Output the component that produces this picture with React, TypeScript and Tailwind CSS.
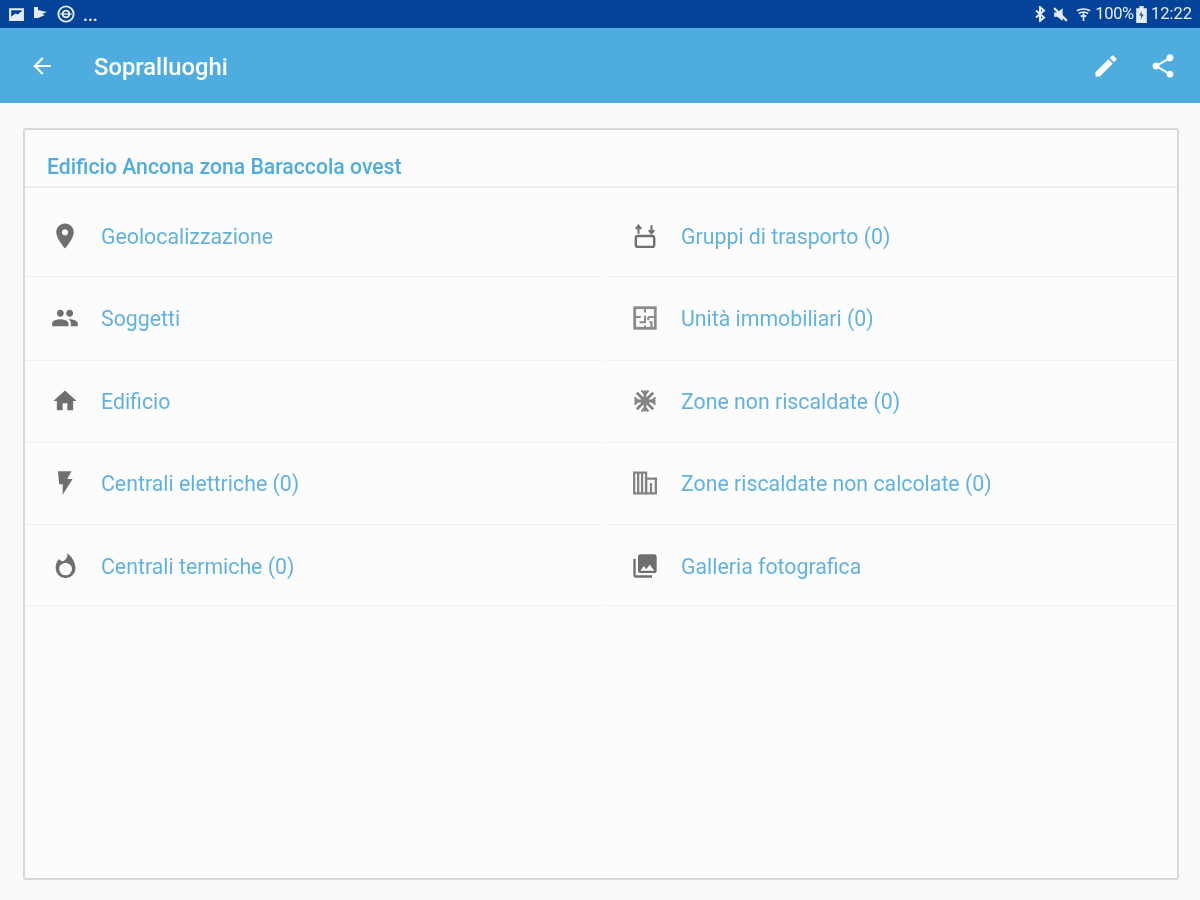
import React from "react";

const P = ({ d, className = "" }: { d: string; className?: string }) => (
  <svg viewBox="0 0 24 24" className={className} fill="currentColor"><path d={d} fillRule="evenodd" /></svg>
);

const icons: Record<string, React.ReactNode> = {
  place: <P className="w-[30px] h-[30px]" d="M12 2C8.13 2 5 5.13 5 9c0 5.25 7 13 7 13s7-7.75 7-13c0-3.87-3.13-7-7-7zm0 9.5c-1.38 0-2.5-1.12-2.5-2.5s1.12-2.5 2.5-2.5 2.5 1.12 2.5 2.5-1.12 2.5-2.5 2.5z" />,
  people: <P className="w-[28px] h-[28px]" d="M16 11c1.66 0 2.99-1.34 2.99-3S17.66 5 16 5c-1.66 0-3 1.34-3 3s1.34 3 3 3zm-8 0c1.66 0 2.99-1.34 2.99-3S9.66 5 8 5C6.34 5 5 6.34 5 8s1.34 3 3 3zm0 2c-2.33 0-7 1.17-7 3.5V19h14v-2.5c0-2.33-4.67-3.5-7-3.5zm8 0c-.29 0-.62.02-.97.05 1.16.84 1.97 1.97 1.97 3.45V19h6v-2.5c0-2.33-4.67-3.5-7-3.5z" />,
  home: <P className="w-[28px] h-[28px]" d="M10 20v-6h4v6h5v-8h3L12 3 2 12h3v8z" />,
  flash: <P className="w-[28px] h-[28px]" d="M6 2h11.500l-3.500 6.500h4.500L10 22v-9H7z" />,
  flame: <P className="w-[28px] h-[28px]" d="M14 1c.5 3-1 5-3 6.500-1 .8-2.500.5-4-1.500-2.500 2.500-3 5-3 8a8.500 8.500 0 0 0 17 0c0-5-3-10-7-13zM12.500 9.500c-3 0-5.500 2.200-5.500 5a5.500 5.500 0 0 0 11 0c0-2.800-2.500-5-5.500-5z" />,
  transport: (
    <svg viewBox="0 0 24 24" className="w-[26px] h-[26px]" fill="none" stroke="currentColor">
      <rect x="3.500" y="12" width="17" height="10" rx="2" strokeWidth="2.200" />
      <path d="M6 10V3M3.500 5.500 6 2.500l2.500 3M18 2v7M15.500 6.500l2.500 3 2.500-3" strokeWidth="1.900" />
    </svg>
  ),
  plan: (
    <svg viewBox="0 0 24 24" className="w-[26px] h-[26px] opacity-80" fill="none" stroke="currentColor">
      <rect x="2.500" y="2.500" width="19" height="19" strokeWidth="2.600" />
      <path d="M12 2v5M12 10v6H7M2 11h6M15 11h7M15 11v3M16 16h2v6M12 19v3" strokeWidth="1.900" />
    </svg>
  ),
  snow: (
    <svg viewBox="0 0 24 24" className="w-[28px] h-[28px] opacity-85" fill="none" stroke="currentColor" strokeWidth="2.400">
      <path d="M5 5l14 14M19 5 5 19M12 3v18M3 12h18" />
      <path d="M9 3l3 3.500L15 3M9 21l3-3.500 3 3.500M3 9l3.500 3L3 15M21 9l-3.500 3 3.500 3" strokeWidth="1.700" />
      <circle cx="12" cy="12" r="2.500" fill="currentColor" strokeWidth="1" />
    </svg>
  ),
  bars: (
    <svg viewBox="0 0 24 24" className="w-[26px] h-[26px] opacity-85" fill="none" stroke="currentColor" strokeWidth="2.100">
      <path d="M2 2.500h11v19H2zM5.700 2.500v19M9.300 2.500v19" />
      <path d="M13 8h9v13.500h-9zM17.500 12v9.500" />
    </svg>
  ),
  photos: <P className="w-[28px] h-[28px]" d="M22 16V4c0-1.100-.9-2-2-2H8c-1.100 0-2 .9-2 2v12c0 1.100.9 2 2 2h12c1.100 0 2-.9 2-2zm-11-4l2.030 2.710L16 11l4 5H8l3-4zM2 6v14c0 1.100.9 2 2 2h14v-2H4V6H2z" />,
};

const left = [
  ["place", "Geolocalizzazione"],
  ["people", "Soggetti"],
  ["home", "Edificio"],
  ["flash", "Centrali elettriche (0)"],
  ["flame", "Centrali termiche (0)"],
];
const right = [
  ["transport", "Gruppi di trasporto (0)"],
  ["plan", "Unità immobiliari (0)"],
  ["snow", "Zone non riscaldate (0)"],
  ["bars", "Zone riscaldate non calcolate (0)"],
  ["photos", "Galleria fotografica"],
];
const rows = [
  "h-[89px] pt-[8px]",
  "h-[84px] pb-[2px]",
  "h-[82px] pb-[2px]",
  "h-[82px] pb-[1px]",
  "h-[81px] pt-[2px]",
];

function Column({ items, className, iconWidth }: { items: string[][]; className: string; iconWidth: string }) {
  return (
    <div className={className}>
      {items.map(([icon, label], i) => (
        <div key={label} className={`flex items-center border-b border-[#f1f1f1] ${rows[i]}`}>
          <span className={`${iconWidth} flex justify-center text-[#6f6f6f]`}>{icons[icon]}</span>
          <span className="text-[21.3px] leading-none text-[#62b2e0] mt-[2px]">{label}</span>
        </div>
      ))}
    </div>
  );
}

export default function App() {
  return (
    <div className="w-[1200px] h-[900px] overflow-hidden flex flex-col bg-[#fafafa] font-['Roboto',sans-serif] blur-[0.6px]">
      <div className="h-[28px] shrink-0 bg-[#034399] flex items-center justify-between pl-[8px] pr-[8px] text-[#e6edf6]">
        <div className="flex items-center gap-[8px]">
          <svg viewBox="0 0 16 16" className="w-[17px] h-[17px]" fill="currentColor">
            <path d="M1 2h14v12H1zM3 10l4-3 2 1 4-3V4H3z" fillRule="evenodd" />
          </svg>
          <svg viewBox="0 0 16 16" className="w-[16px] h-[16px]" fill="currentColor">
            <path d="M1 1h4v3l9 2-5 2 3 1-7 3H1z" />
          </svg>
          <svg viewBox="0 0 16 16" className="w-[18px] h-[18px]" fill="none" stroke="currentColor" strokeWidth="1.700">
            <circle cx="8" cy="8" r="6.800" />
            <circle cx="8" cy="8" r="3" />
            <path d="M3 8h10" strokeWidth="1.200" />
          </svg>
          <span className="text-[17px] leading-none font-bold mt-[2px]">...</span>
        </div>
        <div className="flex items-center">
          <svg viewBox="0 0 12 16" className="w-[12px] h-[16px] mr-[6px]" fill="none" stroke="currentColor" strokeWidth="2">
            <path d="M2 4.500l8 7-4 3.500V1l4 3.500-8 7" />
          </svg>
          <svg viewBox="0 0 16 16" className="w-[17px] h-[17px] mr-[7px]" fill="currentColor">
            <path d="M2 6h3l5-4v12l-5-4H2z" />
            <path d="M2 2l12 12" stroke="currentColor" strokeWidth="2" />
          </svg>
          <svg viewBox="0 0 16 16" className="w-[15px] h-[17px] mr-[4px]" fill="none" stroke="currentColor" strokeWidth="1.800">
            <path d="M1 4c4-2.500 10-2.500 14 0M3 7c3-2 7-2 10 0M5 10c2-1 4-1 6 0M8 5v10" />
          </svg>
          <span className="text-[16.5px] leading-none tracking-[-0.3px]">100%</span>
          <svg viewBox="0 0 10 16" className="w-[11px] h-[17px] ml-[2px] mr-[4px]" fill="currentColor">
            <path d="M3 0h4v2h3v14H0V2h3zM5 5 3 9h2l-1 4 3-5H5z" fillRule="evenodd" />
          </svg>
          <span className="text-[16.5px] leading-none">12:22</span>
        </div>
      </div>

      <div className="h-[75px] shrink-0 bg-[#4facdf] flex items-center text-white">
        <P className="w-[26px] h-[26px] ml-[29px]" d="M20 11H7.830l5.590-5.590L12 4l-8 8 8 8 1.410-1.410L7.830 13H20v-2z" />
        <span className="ml-[39px] text-[23.8px] font-medium leading-none mt-[5px]">Sopralluoghi</span>
        <div className="ml-auto flex items-center mt-[1px]">
          <P className="w-[28px] h-[28px]" d="M3 17.250V21h3.750L17.810 9.940l-3.750-3.750L3 17.250zM20.710 7.040c.39-.39.39-1.020 0-1.410l-2.340-2.340c-.39-.39-1.020-.39-1.410 0l-1.830 1.830 3.750 3.750 1.830-1.830z" />
          <P className="w-[28px] h-[28px] ml-[29px] mr-[23px]" d="M18 16.080c-.76 0-1.440.3-1.960.77L8.910 12.700c.05-.23.09-.46.09-.7s-.04-.47-.09-.7l7.050-4.110c.54.5 1.250.81 2.040.81 1.660 0 3-1.340 3-3s-1.340-3-3-3-3 1.340-3 3c0 .24.04.47.09.7L8.040 9.810C7.500 9.310 6.790 9 6 9c-1.660 0-3 1.340-3 3s1.340 3 3 3c.79 0 1.500-.31 2.040-.81l7.120 4.160c-.05.21-.08.43-.08.65 0 1.610 1.310 2.920 2.920 2.920 1.610 0 2.920-1.310 2.920-2.920s-1.310-2.920-2.920-2.920z" />
        </div>
      </div>

      <div className="flex-1 pt-[25px] pl-[23px] pr-[21px] pb-[20px]">
        <div className="h-full border-2 border-[#d8d8d8] rounded-[3px] bg-[#fcfcfc]">
          <div className="h-[58px] border-b-2 border-[#eeeeee] pl-[22px] pt-[25px]">
            <span className="block text-[21.2px] leading-[24px] font-medium text-[#4facdf]">Edificio Ancona zona Baraccola ovest</span>
          </div>
          <div className="flex">
            <Column items={left} className="w-[576px]" iconWidth="w-[76px] pl-[4px]" />
            <Column items={right} className="ml-[4px] w-[571px]" iconWidth="w-[76px] pl-[4px]" />
          </div>
        </div>
      </div>
    </div>
  );
}
